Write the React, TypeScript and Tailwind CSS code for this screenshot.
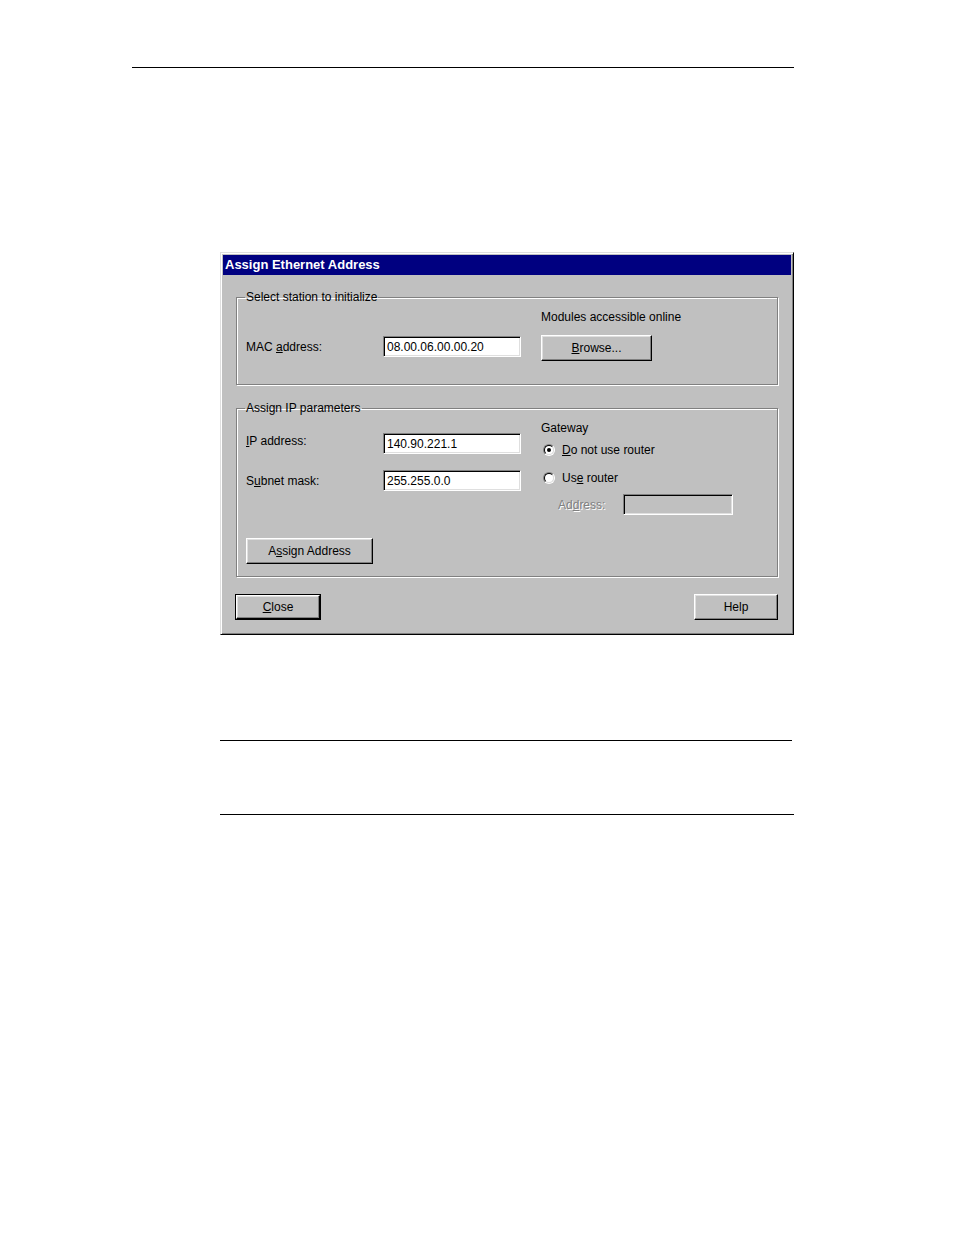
import React from 'react';

// Win9x style dialog on a white document page
const font = { fontFamily: '"Liberation Sans", Arial, sans-serif' };

function Button({ children, w, isDefault }: { children: React.ReactNode; w: string; isDefault?: boolean }) {
  const inner = (
    <div className="flex h-full w-full items-center justify-center border border-t-white border-l-white border-r-black border-b-black bg-[#c0c0c0] text-[12px] leading-[14px] text-black shadow-[inset_-1px_-1px_0_#808080,inset_1px_1px_0_#dfdfdf]">
      {children}
    </div>
  );
  if (isDefault) {
    return <div className={`${w} h-[26px] border border-black`}>{inner}</div>;
  }
  return <div className={`${w} h-[26px]`}>{inner}</div>;
}

function Field({ value, w = 'w-[138px]', disabled }: { value?: string; w?: string; disabled?: boolean }) {
  return (
    <div
      className={`${w} h-[21px] border border-t-[#808080] border-l-[#808080] border-r-white border-b-white shadow-[inset_1px_1px_0_#000,inset_-1px_-1px_0_#dfdfdf] ${disabled ? 'bg-[#c0c0c0]' : 'bg-white'} flex items-center pl-[3px] text-[12px] leading-[14px] text-black`}
    >
      {value}
    </div>
  );
}

function Radio({ checked }: { checked?: boolean }) {
  return (
    <div className="ml-[2px] flex h-[12px] w-[12px] shrink-0 items-center justify-center rounded-full border border-t-[#808080] border-l-[#808080] border-r-white border-b-white">
      <div className="flex h-[10px] w-[10px] items-center justify-center rounded-full border border-t-black border-l-black border-r-[#dfdfdf] border-b-[#dfdfdf] bg-white">
        {checked && <div className="h-[4px] w-[4px] rounded-full bg-black" />}
      </div>
    </div>
  );
}

function Group({ title, h, children }: { title: string; h: string; children: React.ReactNode }) {
  return (
    <fieldset className={`${h} border border-[#808080] pl-[9px] shadow-[inset_1px_1px_0_#fff,1px_1px_0_#fff]`}>
      <legend className="-ml-[1px] px-[1px] text-[12px] leading-[14px] text-black">{title}</legend>
      {children}
    </fieldset>
  );
}

export default function App() {
  return (
    <div className="min-h-[1235px] w-[954px] bg-white pt-[67px]" style={font}>
      <div className="ml-[132px] h-px w-[662px] bg-black" />

      <div className="ml-[220px] mt-[184px] flex h-[383px] w-[574px] flex-col border border-t-[#dfdfdf] border-l-[#dfdfdf] border-r-black border-b-black bg-[#c0c0c0] px-[2px] pt-[2px] shadow-[inset_1px_1px_0_#fff,inset_-1px_-1px_0_#808080]">
        <div className="flex h-[20px] items-center bg-[#000080] pl-[2px] text-[13px] font-bold text-white">
          Assign Ethernet Address
        </div>

        <div className="mt-[15px] px-[13px]">
          <Group title="Select station to initialize" h="h-[95px]">
            <div className="flex items-start">
              <div className="mt-[32px] flex items-center">
                <span className="w-[137px] text-[12px] leading-[14px] text-black">
                  MAC <u>a</u>ddress:
                </span>
                <Field value="08.00.06.00.00.20" />
              </div>
              <div className="ml-[20px] flex flex-col">
                <span className="mt-[6px] text-[12px] leading-[14px] text-black">Modules accessible online</span>
                <div className="mt-[11px]">
                  <Button w="w-[111px]">
                    <span>
                      <u>B</u>rowse...
                    </span>
                  </Button>
                </div>
              </div>
            </div>
          </Group>

          <div className="mt-[16px]">
            <Group title="Assign IP parameters" h="h-[176px]">
              <div className="flex items-start">
                <div className="flex flex-col">
                  <div className="mt-[18px] flex items-center">
                    <span className="mb-[6px] w-[137px] text-[12px] leading-[14px] text-black">
                      <u>I</u>P address:
                    </span>
                    <Field value="140.90.221.1" />
                  </div>
                  <div className="mt-[16px] flex items-center">
                    <span className="w-[137px] text-[12px] leading-[14px] text-black">
                      S<u>u</u>bnet mask:
                    </span>
                    <Field value="255.255.0.0" />
                  </div>
                  <div className="mt-[47px]">
                    <Button w="w-[127px]">
                      <span>
                        A<u>s</u>sign Address
                      </span>
                    </Button>
                  </div>
                </div>
                <div className="ml-[20px] flex flex-col text-[12px] leading-[14px] text-black">
                  <span className="mt-[6px]">Gateway</span>
                  <div className="mt-[8px] flex items-center">
                    <Radio checked />
                    <span className="ml-[7px]">
                      <u>D</u>o not use router
                    </span>
                  </div>
                  <div className="mt-[14px] flex items-center">
                    <Radio />
                    <span className="ml-[7px]">
                      Us<u>e</u> router
                    </span>
                  </div>
                  <div className="mt-[9px] flex items-center pl-[17px]">
                    <span className="w-[65px] text-[#808080] [text-shadow:1px_1px_0_#fff]">
                      Ad<u>d</u>ress:
                    </span>
                    <Field w="w-[110px]" disabled />
                  </div>
                </div>
              </div>
            </Group>
          </div>
        </div>

        <div className="mt-[17px] flex items-start justify-between pl-[12px] pr-[13px]">
          <Button w="w-[86px]" isDefault>
            <span>
              <u>C</u>lose
            </span>
          </Button>
          <Button w="w-[84px]">Help</Button>
        </div>
      </div>

      <div className="ml-[220px] mt-[105px] h-px w-[572px] bg-black" />
      <div className="ml-[220px] mt-[73px] h-px w-[574px] bg-black" />
    </div>
  );
}
